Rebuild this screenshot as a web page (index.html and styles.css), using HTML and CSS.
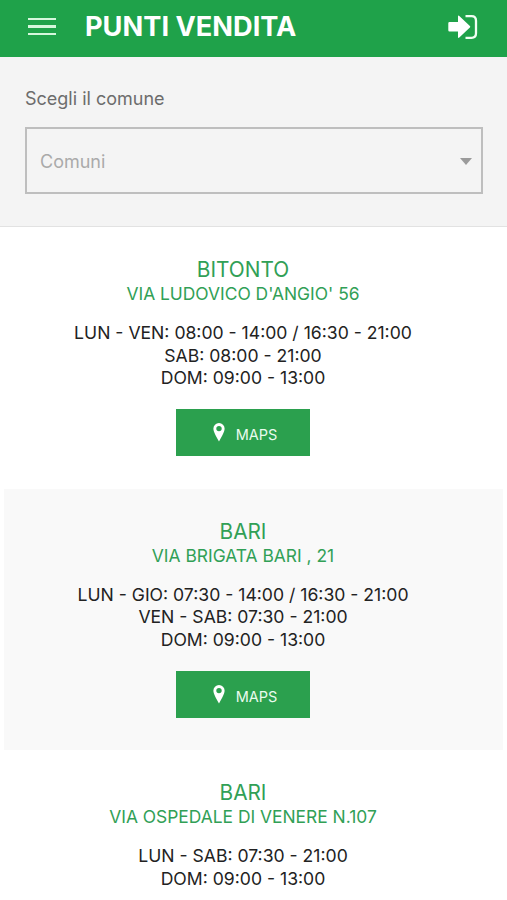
FILE: index.html
```html
<!DOCTYPE html>
<html lang="it">
<head>
    <meta charset="UTF-8">
    <meta name="viewport" content="width=device-width, initial-scale=1.0">
    <title>Punti Vendita</title>
    <link rel="stylesheet" href="styles.css">
</head>
<body>
    <header>
        <button class="menu-btn" aria-label="Menu">
            <span></span>
            <span></span>
            <span></span>
        </button>
        <h1>PUNTI VENDITA</h1>
        <button class="login-btn" aria-label="Accedi">
            <svg width="30" height="26" viewBox="0 0 30 26">
                <path d="M1.500 8h8.500V2.500q0-1.700 1.300-.6l10.600 10q.8.800 0 1.600l-10.600 10q-1.300 1.100-1.300-.6v-5.500H1.500Q.3 17.400.3 16.200v-7Q.3 8 1.500 8z" fill="#fff"/>
                <path d="M17.500 2.200h6q4.500 0 4.500 4.500v12.600q0 4.500-4.500 4.500h-6" fill="none" stroke="#f1fff4" stroke-width="2.300"/>
            </svg>
        </button>
    </header>
    <section class="filter">
        <label id="comuneLabel">Scegli il comune</label>
        <div class="select" role="combobox" aria-labelledby="comuneLabel" tabindex="0">
            <span>Comuni</span>
            <i class="arrow"></i>
        </div>
    </section>
    <main>
        <div class="store">
            <h2>BITONTO</h2>
            <p class="address">VIA LUDOVICO D'ANGIO' 56</p>
            <p class="hours">
                <span>LUN - VEN: 08:00 - 14:00 / 16:30 - 21:00</span>
                <span>SAB: 08:00 - 21:00</span>
                <span>DOM: 09:00 - 13:00</span>
            </p>
            <a class="maps-btn" href="#">
                <svg width="12" height="19" viewBox="0 0 12 19"><path fill-rule="evenodd" d="M6 0a5.600 5.600 0 0 1 5.600 5.700C11.600 8 9.500 12.500 6 18.500 2.500 12.500.4 8 .4 5.700A5.600 5.600 0 0 1 6 0zm0 2.900a2.700 2.700 0 1 0 0 5.400 2.700 2.700 0 0 0 0-5.400z" fill="#fff"/></svg>
                <span>MAPS</span>
            </a>
        </div>
        <div class="store">
            <h2>BARI</h2>
            <p class="address">VIA BRIGATA BARI , 21</p>
            <p class="hours">
                <span>LUN - GIO: 07:30 - 14:00 / 16:30 - 21:00</span>
                <span>VEN - SAB: 07:30 - 21:00</span>
                <span>DOM: 09:00 - 13:00</span>
            </p>
            <a class="maps-btn" href="#">
                <svg width="12" height="19" viewBox="0 0 12 19"><path fill-rule="evenodd" d="M6 0a5.600 5.600 0 0 1 5.600 5.700C11.600 8 9.500 12.500 6 18.500 2.500 12.500.4 8 .4 5.700A5.600 5.600 0 0 1 6 0zm0 2.900a2.700 2.700 0 1 0 0 5.400 2.700 2.700 0 0 0 0-5.400z" fill="#fff"/></svg>
                <span>MAPS</span>
            </a>
        </div>
        <div class="store last">
            <h2>BARI</h2>
            <p class="address">VIA OSPEDALE DI VENERE N.107</p>
            <p class="hours">
                <span>LUN - SAB: 07:30 - 21:00</span>
                <span>DOM: 09:00 - 13:00</span>
            </p>
        </div>
    </main>
</body>
</html>
```
FILE: styles.css
```css
* {
    box-sizing: border-box;
}
body {
    font-family: Inter, Roboto, sans-serif;
    margin: 0;
    background-color: #fff;
}
h1, h2, p {
    margin: 0;
}
button {
    background: none;
    border: none;
    padding: 0;
    cursor: pointer;
}
header {
    display: flex;
    align-items: center;
    height: 57px;
    padding: 0 29px 4px 28px;
    background-color: #1fa24a;
    color: #fff;
}
.menu-btn {
    display: flex;
    flex-direction: column;
    gap: 5px;
    width: 28px;
    margin-right: 29px;
}
.menu-btn span {
    height: 2.300px;
    background: #d5f7dc;
}
header h1 {
    flex: 1;
    font-size: 27.200px;
    line-height: 34px;
    font-weight: 700;
    white-space: nowrap;
}
.login-btn {
    height: 26px;
}
.login-btn svg {
    display: block;
}
.filter {
    height: 170px;
    padding: 30px 24px 0 25px;
    background: #f4f4f4;
    border-bottom: 1px solid #e2e2e2;
}
.filter label {
    display: block;
    font-size: 18px;
    line-height: 24px;
    color: #6c6c6c;
}
.select {
    display: flex;
    justify-content: space-between;
    align-items: center;
    height: 67px;
    margin-top: 16px;
    padding: 1px 9px 0 13px;
    border: 2px solid #bebebe;
    font-size: 18px;
    color: #aaa;
}
.arrow {
    border-left: 6.500px solid transparent;
    border-right: 6.500px solid transparent;
    border-top: 7px solid #9b9b9b;
}
main {
    padding: 0 4px;
}
.store {
    display: flex;
    flex-direction: column;
    align-items: center;
    height: 261.500px;
    padding: 30px 21px 0 0;
    text-align: center;
}
.store:nth-child(even) {
    background: #f9f9f9;
}
.store.last {
    height: auto;
}
.store h2 {
    font-size: 20.800px;
    line-height: 26px;
    font-weight: 400;
    color: #31a056;
}
.address {
    font-size: 17.400px;
    line-height: 22px;
    color: #31a056;
}
.hours {
    margin-top: 17px;
    font-size: 17.600px;
    line-height: 22.700px;
    color: #222;
}
.hours span {
    display: block;
}
.maps-btn {
    display: flex;
    justify-content: center;
    align-items: center;
    gap: 11px;
    width: 134px;
    height: 47px;
    margin-top: 19px;
    padding-left: 4px;
    background: #2ba04e;
    color: #e9fbee;
    font-size: 14.500px;
    text-decoration: none;
}
.maps-btn span {
    padding-top: 4px;
}
```
